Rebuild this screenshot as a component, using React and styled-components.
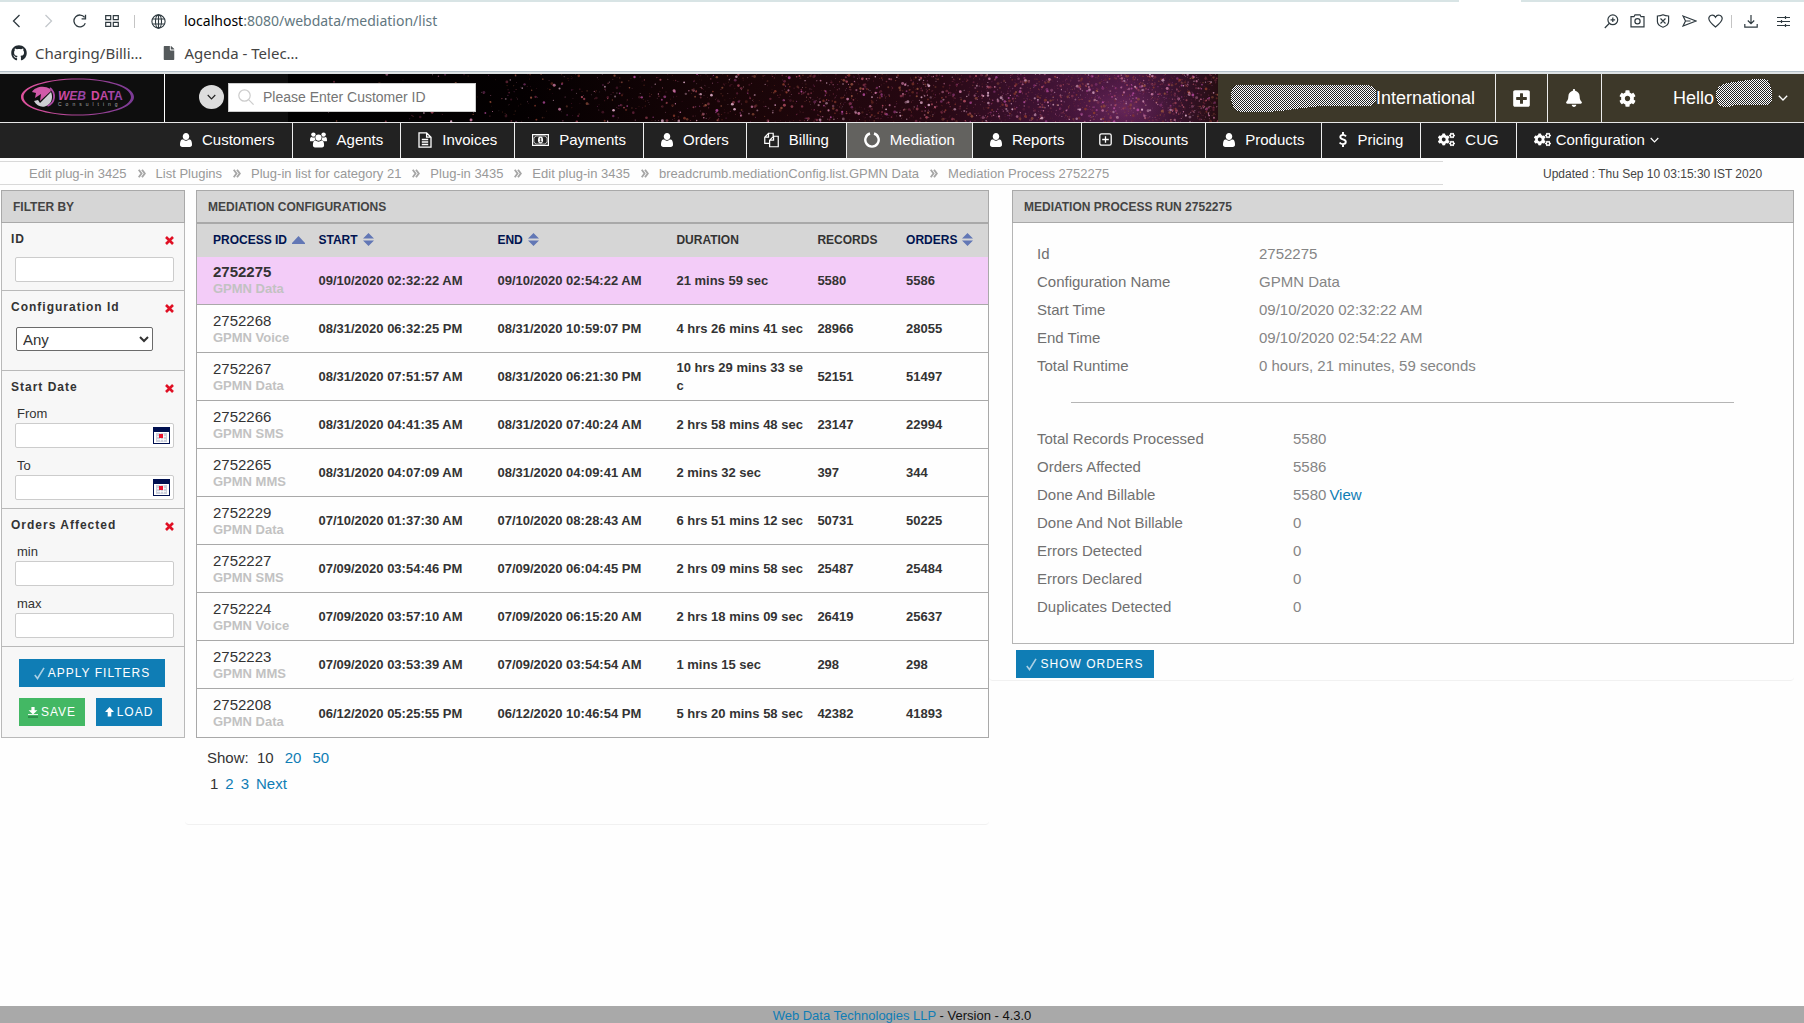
import React from "react";
import styled, { createGlobalStyle, css } from "styled-components";
import {
  FaBell, FaCog, FaCogs, FaPlusSquare, FaGithub, FaFile,
} from "react-icons/fa";

const sans = `"Liberation Sans", Arial, sans-serif`;
const chromeFont = `"Noto Sans", "Open Sans", sans-serif`;
const line = "#a9a9a9";
const headFill = "#d6d6d6";
const blue = "#0f7db5";

const Global = createGlobalStyle`
  * { box-sizing: border-box; }
  html, body, #root { height: 100%; }
  body { margin: 0; background: #fefefe; color: #333; font-family: ${sans}; font-size: 15px; }
  a { color: ${blue}; text-decoration: none; }
  button, input, select { font-family: inherit; margin: 0; }
  button { cursor: pointer; }
  svg { display: block; flex: none; }
`;

const Page = styled.div`
  display: flex;
  flex-direction: column;
  min-height: 100%;
`;

/* ---------- browser bar ---------- */
const Chrome = styled.div`
  background: #fff;
  border-bottom: 1px solid #b3bfc7;
  font-family: ${chromeFont};
`;
const TabEdge = styled.div`
  display: flex;
  height: 2px;
  background: #d8e4e5;
`;
const ActiveTab = styled.span`
  width: 62px;
  margin-left: auto;
  margin-right: 283px;
  background: #fff;
`;
const AddressRow = styled.div`
  display: flex;
  align-items: center;
  height: 38px;
  padding: 0 5px 0 9px;
`;
const ChromeButton = styled.button`
  display: flex;
  align-items: center;
  justify-content: center;
  width: ${(p) => p.$w || 26}px;
  height: 26px;
  padding: 0;
  border: 0;
  background: none;
  color: ${(p) => (p.$off ? "#c4c8cc" : "#2f3a40")};
`;
const ChromeRule = styled.span`
  width: 1px;
  height: 13px;
  margin: 0 ${(p) => p.$gap}px;
  background: #c4c4c4;
`;
const Address = styled.div`
  flex: 1;
  font-size: 14px;
  line-height: 20px;
  color: #627780;
`;
const Host = styled.span`
  color: #000;
`;
const Bookmarks = styled.div`
  display: flex;
  align-items: center;
  gap: 20px;
  height: 31px;
  padding: 0 11px 5px;
`;
const Bookmark = styled.a`
  display: flex;
  align-items: center;
  gap: 8px;
  font-size: 15px;
  line-height: 20px;
  color: #444;
`;

/* ---------- header ---------- */
const Header = styled.header`
  display: flex;
  height: 51px;
  border-top: 2px solid #dde2e4;
  border-bottom: 1px solid #e6e6e6;
  background: #0e0e0e;
`;
const LogoCell = styled.a`
  display: flex;
  align-items: center;
  width: 165px;
  padding: 0 0 3px 21px;
  border-right: 1px solid #fff;
`;
const SearchArea = styled.div`
  position: relative;
  flex: 1;
  display: flex;
  align-items: center;
  gap: 4px;
  padding: 0 0 2px 34px;
`;
const Stars = styled.svg`
  position: absolute;
  inset: 0 0 0 123px;
  width: calc(100% - 123px);
  height: 100%;
`;
const RoundButton = styled.button`
  position: relative;
  display: flex;
  align-items: center;
  justify-content: center;
  width: 25px;
  height: 24px;
  padding: 0;
  border: 0;
  border-radius: 50%;
  background: #ddd;
  color: #222;
`;
const SearchBox = styled.label`
  position: relative;
  display: flex;
  align-items: center;
  gap: 9px;
  width: 248px;
  height: 29px;
  padding-left: 9px;
  border: 1px solid #ccc;
  background: #fff;
  color: #ccc;
`;
const SearchInput = styled.input`
  flex: 1;
  min-width: 0;
  padding: 0;
  border: 0;
  outline: 0;
  background: none;
  font-size: 14px;
  color: #333;
  &::placeholder { color: #757575; opacity: 1; }
`;
const AccountBar = styled.div`
  display: flex;
  background: #3d3829;
  color: #fff;
  font-size: 18px;
`;
const Company = styled.div`
  display: flex;
  align-items: center;
  padding: 0 20px 0 13px;
`;
const ToolButton = styled.button`
  display: flex;
  align-items: center;
  justify-content: center;
  width: ${(p) => p.$w}px;
  padding: 0;
  border: 0;
  border-left: 1px solid #ececec;
  background: none;
  color: #fff;
`;
const Greeting = styled.button`
  display: flex;
  align-items: center;
  padding: 0 16px 0 20px;
  border: 0;
  background: none;
  color: #fff;
  font-size: 18px;
`;
const UserName = styled.span`
  margin: 0 6px 0 2px;
`;

/* ---------- main menu ---------- */
const Menu = styled.nav`
  display: flex;
  height: 35px;
  padding-left: 163px;
  background: #222;
`;
const MenuItem = styled.a`
  display: flex;
  align-items: center;
  gap: ${(p) => p.$gap || 10}px;
  padding: 0 17px 2px;
  border-right: ${(p) => (p.$last ? "0" : "1px solid #eee")};
  background: ${(p) => (p.$active ? "#63625f" : "none")};
  color: #fff;
  font-size: 15px;
  white-space: nowrap;
`;

/* ---------- breadcrumbs ---------- */
const TrailRow = styled.div`
  display: flex;
  align-items: center;
  margin: 3px 0 5px;
`;
const Trail = styled.ol`
  display: flex;
  flex: 1;
  align-items: center;
  height: 24px;
  margin: 0;
  padding: 0 0 0 29px;
  border: solid #d9d9d9;
  border-width: 1px 0;
  list-style: none;
  font-size: 13px;
`;
const Crumb = styled.li`
  display: flex;
  align-items: center;
  gap: 11px;
  margin-right: 10px;
  white-space: nowrap;
`;
const CrumbLink = styled.a`
  color: #999;
`;
const Updated = styled.div`
  width: 361px;
  padding: 1px 0 0 100px;
  font-size: 12px;
  color: #444;
`;

/* ---------- columns ---------- */
const Columns = styled.main`
  flex: 1;
  display: grid;
  grid-template-columns: 184px minmax(0, 804fr) minmax(0, 805fr);
  align-items: start;
  padding: 0 10px 0 1px;
`;
const PanelTitle = styled.h2`
  height: 33px;
  margin: 0;
  padding: 0 11px;
  border: 1px solid ${line};
  background: ${headFill};
  font-size: 12px;
  font-weight: bold;
  line-height: 32px;
  color: #444;
  text-transform: uppercase;
`;

/* filters */
const Filters = styled.form`
  border: 1px solid #b9b9b9;
  border-top: 0;
  background: #f7f7f7;
`;
const FilterGroup = styled.fieldset`
  min-width: 0;
  margin: 0;
  padding: 8px 10px 8px 13px;
  border: 0;
  border-bottom: 1px solid #b9b9b9;
`;
const FilterHead = styled.div`
  display: flex;
  align-items: center;
  justify-content: space-between;
  margin-left: -4px;
  height: 16px;
`;
const FilterName = styled.span`
  font-size: 12px;
  font-weight: bold;
  letter-spacing: 1px;
  line-height: 16px;
`;
const RemoveButton = styled.button`
  display: flex;
  padding: 3px 0 0;
  border: 0;
  background: none;
`;
const Field = styled.label`
  display: block;
  margin-top: ${(p) => (p.$next ? 9 : 10)}px;
`;
const FieldName = styled.span`
  display: block;
  padding-left: 2px;
  font-size: 13px;
  line-height: 18px;
`;
const InputFrame = styled.span`
  display: flex;
  align-items: center;
  width: 159px;
  height: 25px;
  padding-right: 3px;
  border: 1px solid #ccc;
  border-radius: 2px;
  background: #fff;
`;
const TextInput = styled.input`
  flex: 1;
  min-width: 0;
  height: 100%;
  padding: 0 4px;
  border: 0;
  outline: 0;
  background: none;
  font-size: 13px;
`;
const CalendarButton = styled.button`
  display: flex;
  padding: 0;
  border: 0;
  background: none;
`;
const Select = styled.select`
  display: block;
  width: 137px;
  height: 24px;
  margin: 12px 0 11px 1px;
  padding: 0 2px;
  border: 1px solid #6b6b6b;
  border-radius: 2px;
  background: #fff;
  font-size: 15px;
  color: #333;
`;
const FilterActions = styled.div`
  display: flex;
  flex-wrap: wrap;
  gap: 11px;
  padding: 12px 13px 11px 17px;
`;
const Button = styled.button`
  display: flex;
  align-items: center;
  justify-content: center;
  gap: 3px;
  width: ${(p) => p.$w}px;
  height: 28px;
  padding: 0;
  border: 0;
  background: ${(p) => (p.$green ? "#43b864" : blue)};
  color: #fff;
  font-size: 12px;
  letter-spacing: 1px;
  text-transform: uppercase;
`;

/* list */
const ListColumn = styled.section`
  min-height: 635px;
  padding-left: 11px;
  border-bottom: 1px solid #f1f1f1;
  border-radius: 0 0 4px 4px;
`;
const Table = styled.table`
  width: 100%;
  border-collapse: collapse;
  table-layout: fixed;
  border: 1px solid ${line};
`;
const Th = styled.th`
  height: 33px;
  padding: 0 0 1px;
  background: ${headFill};
  font-size: 12px;
  text-align: left;
  text-transform: uppercase;
  color: #333;
  &:first-child { padding-left: 16px; }
`;
const SortLink = styled.a`
  display: flex;
  align-items: center;
  gap: 5px;
  color: #00134f;
`;
const Row = styled.tr`
  ${(p) => p.$on && css`background: #f3ccf8;`}
`;
const Td = styled.td`
  height: 48px;
  padding: 1px 10px 0 0;
  border-bottom: 1px solid ${line};
  font-size: 13px;
  font-weight: bold;
  line-height: 18px;
  word-break: break-all;
  &:first-child { padding: 0 0 0 16px; }
  tr:last-child > & { height: 49px; }
`;
const ProcessLink = styled.a`
  display: block;
  font-size: 15px;
  font-weight: ${(p) => (p.$on ? "bold" : "normal")};
  line-height: 17px;
  color: #333;
`;
const ConfigName = styled.span`
  display: block;
  font-size: 13px;
  line-height: 17px;
  color: #c2c2c2;
`;
const Pager = styled.div`
  display: flex;
  gap: ${(p) => p.$gap}px;
  padding-left: ${(p) => p.$left}px;
  line-height: 26px;
`;
const Pagers = styled.div`
  padding-top: 7px;
`;

/* details */
const DetailColumn = styled.section`
  padding: 0 0 2px 23px;
  border-bottom: 1px solid #f1f1f1;
  border-radius: 0 0 4px 4px;
`;
const Details = styled.div`
  margin-bottom: 6px;
  padding: 16px 0 23px;
  border: 1px solid #b5b5b5;
  border-top: 0;
`;
const DetailList = styled.dl`
  display: grid;
  grid-template-columns: ${(p) => p.$label}px 1fr;
  grid-auto-rows: 28px;
  align-items: center;
  margin: 0;
  padding-left: 24px;
`;
const DetailName = styled.dt`
  color: #707070;
`;
const DetailValue = styled.dd`
  margin: 0;
  color: #858585;
`;
const ViewLink = styled.a`
  margin-left: 3px;
`;
const Divider = styled.hr`
  margin: 23px 59px 21px 58px;
  border: 0;
  border-top: 1px solid #b5b5b5;
`;
const ShowOrders = styled(Button)`
  margin-left: 4px;
`;

const Footer = styled.footer`
  height: 17px;
  background: #a9a9a9;
  font-size: 13px;
  line-height: 19px;
  text-align: center;
  color: #111;
`;

/* ---------- drawings ---------- */
const Stroke = ({ w = 16, h = 16, width = 1.3, children }) => (
  <svg width={w} height={h} viewBox={`0 0 ${w} ${h}`} fill="none" stroke="currentColor" strokeWidth={width}>
    {children}
  </svg>
);

const UserIcon = () => (
  <svg width="12" height="14" viewBox="0 256 1408 1536" preserveAspectRatio="none" fill="#fff">
    <path d="M1408 1533q0 120-73 189.5t-194 69.5h-874q-121 0-194-69.5t-73-189.5q0-53 3.5-103.5t14-109 26.5-108.5 43-97.5 62-81 85.5-53.5 111.5-20q9 0 42 21.5t74.5 48 108 48 133.5 21.5 133.5-21.5 108-48 74.5-48 42-21.5q61 0 111.5 20t85.5 53.5 62 81 43 97.5 26.5 108.5 14 109 3.5 103.5zm-320-893q0 159-112.5 271.5t-271.5 112.5-271.5-112.5-112.5-271.5 112.5-271.5 271.5-112.5 271.5 112.5 112.5 271.5z" />
  </svg>
);
const GroupIcon = () => (
  <svg width="17" height="16" viewBox="0 0 17 16" fill="#fff">
    <circle cx="3.4" cy="2.6" r="2.2" />
    <circle cx="13.6" cy="2.6" r="2.2" />
    <path d="M0 8.4C0 6 .6 5 1.6 5c1 .7 2.4.8 3.300.3C4.700 6.500 5 7.400 5.600 8.100 4.600 8.200 3.800 8.600 3.200 9.300H1.300C.4 9.300 0 9 0 8.400zM17 8.400C17 6 16.400 5 15.400 5c-1 .7-2.400.8-3.300.3.2 1.200-.1 2.100-.7 2.800 1 .1 1.800.5 2.400 1.200h1.900c.9 0 1.300-.3 1.300-.9z" />
    <circle cx="8.500" cy="5.600" r="3.100" />
    <path d="M2.900 13.200c0-2.800.7-4.600 2.500-4.600 2 1.400 4.200 1.400 6.200 0 1.800 0 2.500 1.800 2.500 4.600 0 1.300-.8 2.200-2.100 2.200H5c-1.300 0-2.100-.9-2.100-2.200z" />
  </svg>
);
const InvoiceIcon = () => (
  <Stroke w={14} h={16}>
    <path d="M1 .8h7.600L13 5.200v10H1zM8.600.8v4.400H13M3.800 7.500h6.400M3.800 10h6.400M3.800 12.500h6.400" />
  </Stroke>
);
const MoneyIcon = () => (
  <svg width="17" height="12" viewBox="0 0 18 12" preserveAspectRatio="none" fill="none" stroke="#fff">
    <rect x=".6" y=".6" width="16.800" height="10.800" strokeWidth="1.300" />
    <path d="M2 3.600A2 2 0 003.800 2h10.400A2 2 0 0016 3.600v4.800A2 2 0 0014.200 10H3.800A2 2 0 002 8.400z" strokeWidth=".7" />
    <ellipse cx="9" cy="6" rx="2.700" ry="3.400" fill="#fff" stroke="none" />
    <path d="M8.200 4.900l1-.7v3.400M8 7.700h2.300" stroke="#222" strokeWidth=".9" />
  </svg>
);
const CopyIcon = () => (
  <svg width="15" height="16" viewBox="0 0 16 16" fill="none" stroke="#fff" strokeWidth="1.300">
    <path d="M6 11.500H.8V5L4.800.8h5V4M4.800.8V5h-4M10.200 4h5v11.200H6V8.200zM10.200 4v4.200H6" />
  </svg>
);
const NotchIcon = () => (
  <Stroke w={16} h={16} width={2.400}>
    <path d="M10 1.500a6.700 6.700 0 11-4 0" />
  </Stroke>
);
const PlusBoxIcon = () => (
  <Stroke w={13} h={13}>
    <rect x=".8" y=".8" width="11.400" height="11.400" rx="1.800" />
    <path d="M6.500 3.200v6.600M3.200 6.500h6.600" />
  </Stroke>
);
const DollarIcon = () => (
  <svg width="8" height="15" viewBox="0 0 8 15" fill="none" stroke="#fff" strokeWidth="1.900">
    <path d="M7 4.400C6.200 3.300 5.200 2.900 4 2.900c-1.700 0-2.700.9-2.700 2.100 0 3.100 5.500 1.500 5.500 4.800 0 1.400-1.100 2.300-2.900 2.300-1.400 0-2.500-.5-3.300-1.600M4 0v3M4 12v3" />
  </svg>
);
const Chevron = ({ w = 10 }) => (
  <svg width={w} height="6" viewBox="0 0 10 6" fill="none" stroke="currentColor" strokeWidth="1.300">
    <path d="M.8.8L5 5 9.200.8" />
  </svg>
);
const CrumbMark = () => (
  <svg width="8" height="9" viewBox="0 0 8 9" fill="none" stroke="#a6a6a6" strokeWidth="1.900">
    <path d="M.7.7l2.800 3.800L.7 8.300M4 .7l2.800 3.800L4 8.300" />
  </svg>
);
const CrossIcon = () => (
  <svg width="9" height="9" viewBox="0 0 9 9" stroke="#e01024" strokeWidth="2.600">
    <path d="M1 1l7 7M8 1L1 8" />
  </svg>
);
const CalendarIcon = () => (
  <svg width="17" height="17" viewBox="0 0 17 17">
    <rect width="17" height="17" fill="#001050" />
    <rect x="1" y="5" width="15" height="11" fill="#fff" />
    <rect x="3" y="6" width="11" height="9" fill="#ccd0dc" />
    <path d="M4 9.500h9M4 12.500h9M10.500 6.500v8M7.500 6.500v8" stroke="#fff" strokeWidth=".7" />
    <rect x="6" y="7" width="4" height="4" fill="#e8112d" />
  </svg>
);
const CheckIcon = () => (
  <svg width="11" height="13" viewBox="0 0 11 13" fill="none" stroke="#a9cfe4" strokeWidth="1.600">
    <path d="M.8 8l2.700 3.500L10 .8" />
  </svg>
);
const SaveIcon = () => (
  <svg width="10" height="11" viewBox="0 0 10 11">
    <path d="M3.400 0h3.200v3.200h2.800L5 7.600.6 3.200h2.800z" fill="#fff" />
    <path d="M0 7.500h10" stroke="#e6f6ea" />
    <path d="M0 10h10" stroke="#1f6b36" />
  </svg>
);
const LoadIcon = () => (
  <svg width="9" height="10" viewBox="0 0 9 10" fill="#fff">
    <path d="M4.500 0L9 5H6.300v4.500H2.700V5H0z" />
  </svg>
);
const SortBoth = () => (
  <svg width="11" height="13" viewBox="0 0 11 13" fill="#6277b5">
    <path d="M5.500 0L11 5.500H0zM0 7.500h11L5.500 13z" />
  </svg>
);
const SortUp = () => (
  <svg width="13" height="8" viewBox="0 0 13 8" fill="#6277b5">
    <path d="M6.500 0L13 7v1H0V7z" />
  </svg>
);

const Logo = () => (
  <svg width="113" height="38" viewBox="0 0 113 38" role="img" aria-label="Web Data Consulting">
    <defs>
      <linearGradient id="ring" x1="0" x2="1">
        <stop offset="0" stopColor="#e0529c" />
        <stop offset="1" stopColor="#7a3a95" />
      </linearGradient>
      <linearGradient id="word" x1="0" x2="1">
        <stop offset="0" stopColor="#dd4a9e" />
        <stop offset="1" stopColor="#8e44a8" />
      </linearGradient>
    </defs>
    <path fillRule="evenodd" fill="url(#ring)" d="M56.500.5C88 .5 113 8.500 113 19S88 37.500 56.500 37.500 0 29.500 0 19 25 .5 56.500.5zm0 1C27 1.500 2.500 9 2.500 19S27 36.500 56.500 36.500 110 29 110 19 86 1.500 56.500 1.500z" />
    <path d="M11 14c3-5 12-7 18-3l1 2-11 10 1-7-6 4 1-5z" fill="#d05aa8" />
    <path d="M13 23l4-1 2 3L30 14c2 5 1 10-3 13-5 3.500-11 1.500-14-4z" fill="#cfd0d4" />
    <path d="M29 10c6 5 5.500 15-2.500 18" fill="none" stroke="#b04aa6" strokeWidth="1.800" />
    <text x="37" y="22" fontFamily="Liberation Sans, sans-serif" fontWeight="bold" fontStyle="italic" fontSize="12" fill="url(#word)">WEB</text>
    <text x="70" y="22" fontFamily="Liberation Sans, sans-serif" fontWeight="bold" fontSize="12" fill="url(#word)">DATA</text>
    <text x="37" y="28" fontFamily="Liberation Sans, sans-serif" fontSize="5" letterSpacing="4" fill="#a8a8a8">Consulting</text>
  </svg>
);

const starColors = ["#a8485c", "#7c2f45", "#c878a0", "#8b3a2c", "#d9a8c4", "#b04898", "#93503c", "#6a2440"];
function makeStars() {
  let seed = 20;
  const next = () => {
    seed = (seed * 16807) % 2147483647;
    return seed / 2147483647;
  };
  return Array.from({ length: 2600 }, (_, i) => {
    const x = 930 * Math.pow(next(), 0.42);
    return {
      x, y: next() * 48, r: 0.4 + Math.pow(next(), 3) * 1.1,
      fill: starColors[Math.floor(next() * starColors.length)],
      opacity: 0.35 + next() * 0.6, key: i,
    };
  });
}
const stars = makeStars();

const Starfield = () => (
  <Stars viewBox="0 0 930 48" preserveAspectRatio="xMaxYMid slice" aria-hidden="true">
    <defs>
      <linearGradient id="sky" x1="0" x2="1">
        <stop offset="0" stopColor="#000" />
        <stop offset=".25" stopColor="#040001" />
        <stop offset=".5" stopColor="#1a0508" />
        <stop offset=".7" stopColor="#270813" />
        <stop offset=".8" stopColor="#3c1130" />
        <stop offset=".9" stopColor="#4f1a45" />
        <stop offset=".95" stopColor="#3a1330" />
        <stop offset="1" stopColor="#260d12" />
      </linearGradient>
      <radialGradient id="glow">
        <stop offset="0" stopColor="#a0488c" stopOpacity=".3" />
        <stop offset="1" stopColor="#7a2a70" stopOpacity="0" />
      </radialGradient>
    </defs>
    <rect width="930" height="48" fill="url(#sky)" />
    <ellipse cx="838" cy="34" rx="60" ry="28" fill="url(#glow)" />
    {stars.map((s) => (
      <circle key={s.key} cx={s.x} cy={s.y} r={s.r} fill={s.fill} opacity={s.opacity} />
    ))}
  </Stars>
);

const Scribble = ({ id, w, h, d }) => (
  <svg width={w} height={h} viewBox={`0 0 ${w} ${h}`} aria-hidden="true" shapeRendering="crispEdges">
    <defs>
      <pattern id={id} width="2" height="2" patternUnits="userSpaceOnUse">
        <rect width="2" height="2" fill="#222" />
        <rect width="1" height="1" fill="#fff" />
        <rect x="1" y="1" width="1" height="1" fill="#fff" />
      </pattern>
    </defs>
    <path d={d} fill={`url(#${id})`} />
  </svg>
);

/* ---------- data ---------- */
const menu = [
  ["Customers", <UserIcon />],
  ["Agents", <GroupIcon />],
  ["Invoices", <InvoiceIcon />],
  ["Payments", <MoneyIcon />],
  ["Orders", <UserIcon />],
  ["Billing", <CopyIcon />],
  ["Mediation", <NotchIcon />],
  ["Reports", <UserIcon />],
  ["Discounts", <PlusBoxIcon />],
  ["Products", <UserIcon />],
  ["Pricing", <DollarIcon />],
  ["CUG", <FaCogs size={17} />],
];
const crumbs = [
  "Edit plug-in 3425", "List Plugins", "Plug-in list for category 21", "Plug-in 3435", "Edit plug-in 3435",
  "breadcrumb.mediationConfig.list.GPMN Data", "Mediation Process 2752275",
];
const processes = [
  ["2752275", "GPMN Data", "09/10/2020 02:32:22 AM", "09/10/2020 02:54:22 AM", "21 mins 59 sec", "5580", "5586"],
  ["2752268", "GPMN Voice", "08/31/2020 06:32:25 PM", "08/31/2020 10:59:07 PM", "4 hrs 26 mins 41 sec", "28966", "28055"],
  ["2752267", "GPMN Data", "08/31/2020 07:51:57 AM", "08/31/2020 06:21:30 PM", "10 hrs 29 mins 33 sec", "52151", "51497"],
  ["2752266", "GPMN SMS", "08/31/2020 04:41:35 AM", "08/31/2020 07:40:24 AM", "2 hrs 58 mins 48 sec", "23147", "22994"],
  ["2752265", "GPMN MMS", "08/31/2020 04:07:09 AM", "08/31/2020 04:09:41 AM", "2 mins 32 sec", "397", "344"],
  ["2752229", "GPMN Data", "07/10/2020 01:37:30 AM", "07/10/2020 08:28:43 AM", "6 hrs 51 mins 12 sec", "50731", "50225"],
  ["2752227", "GPMN SMS", "07/09/2020 03:54:46 PM", "07/09/2020 06:04:45 PM", "2 hrs 09 mins 58 sec", "25487", "25484"],
  ["2752224", "GPMN Voice", "07/09/2020 03:57:10 AM", "07/09/2020 06:15:20 AM", "2 hrs 18 mins 09 sec", "26419", "25637"],
  ["2752223", "GPMN MMS", "07/09/2020 03:53:39 AM", "07/09/2020 03:54:54 AM", "1 mins 15 sec", "298", "298"],
  ["2752208", "GPMN Data", "06/12/2020 05:25:55 PM", "06/12/2020 10:46:54 PM", "5 hrs 20 mins 58 sec", "42382", "41893"],
];
const columnWidths = ["15.4%", "22.6%", "22.6%", "17.8%", "11.2%", "10.4%"];
const runInfo = [
  ["Id", "2752275"],
  ["Configuration Name", "GPMN Data"],
  ["Start Time", "09/10/2020 02:32:22 AM"],
  ["End Time", "09/10/2020 02:54:22 AM"],
  ["Total Runtime", "0 hours, 21 minutes, 59 seconds"],
];
const runTotals = [
  ["Total Records Processed", "5580"],
  ["Orders Affected", "5586"],
  ["Done And Billable", "5580", true],
  ["Done And Not Billable", "0"],
  ["Errors Detected", "0"],
  ["Errors Declared", "0"],
  ["Duplicates Detected", "0"],
];

const Group = ({ name, children }) => (
  <FilterGroup aria-label={name}>
    <FilterHead>
      <FilterName>{name}</FilterName>
      <RemoveButton type="button" aria-label={`Remove ${name}`}><CrossIcon /></RemoveButton>
    </FilterHead>
    {children}
  </FilterGroup>
);

const TextField = ({ name, label, next, date }) => (
  <Field $next={next}>
    {name && <FieldName>{name}</FieldName>}
    <InputFrame>
      <TextInput type="text" aria-label={label || name} />
      {date && <CalendarButton type="button" aria-label={`Choose ${name}`}><CalendarIcon /></CalendarButton>}
    </InputFrame>
  </Field>
);

const BrowserBar = () => (
  <Chrome>
    <TabEdge><ActiveTab /></TabEdge>
    <AddressRow>
      <ChromeButton $w={14} aria-label="Back"><Stroke w={9} h={14}><path d="M7.500 1L1.500 7l6 6" /></Stroke></ChromeButton>
      <ChromeButton $w={50} $off aria-label="Forward"><Stroke w={9} h={14}><path d="M1.500 1l6 6-6 6" /></Stroke></ChromeButton>
      <ChromeButton $w={14} aria-label="Reload"><Stroke w={14} h={14}><path d="M12.300 9.200A5.900 5.900 0 1111.600 3.400M12.500.8v4H8.600" /></Stroke></ChromeButton>
      <ChromeButton $w={50} aria-label="Speed dial"><Stroke w={14} h={12} width={1.200}><path d="M.7.7h5v4h-5zM8.300.7h5v4h-5zM.7 7.300h5v4h-5zM8.300 7.300h5v4h-5z" /></Stroke></ChromeButton>
      <ChromeRule $gap={-3} />
      <ChromeButton $w={52} aria-label="Site information"><Stroke w={15} h={15} width={1.100}><circle cx="7.500" cy="7.500" r="6.600" /><ellipse cx="7.500" cy="7.500" rx="3" ry="6.600" /><path d="M1.500 5h12M1.500 10h12M7.500 1v13" /></Stroke></ChromeButton>
      <Address><Host>localhost</Host>:8080/webdata/mediation/list</Address>
      <ChromeButton aria-label="Zoom"><Stroke w={15} h={15} width={1.200}><circle cx="8.800" cy="5.800" r="4.900" /><path d="M5.200 9.500L.8 14M6.500 5.800h4.600M8.800 3.500v4.600" /></Stroke></ChromeButton>
      <ChromeButton aria-label="Snapshot"><Stroke w={15} h={14} width={1.200}><path d="M1 2.700h3L5 .8h5l1 1.900h3v10.200H1z" /><circle cx="7.500" cy="7.300" r="2.600" /></Stroke></ChromeButton>
      <ChromeButton aria-label="Ad blocker"><Stroke w={14} h={14} width={1.200}><path d="M7 .8c2 1 4 1.200 5.600 1.200v5.500c0 2.500-2 4.500-5.600 5.700C3.400 12 1.400 10 1.400 7.500V2C3 2 5 1.800 7 .8zM4.500 4.500l5 5M9.500 4.500l-5 5" /></Stroke></ChromeButton>
      <ChromeButton aria-label="Send to flow"><Stroke w={15} h={12} width={1.200}><path d="M1 1l13 5-13 5 2.500-5zM3.500 6h5" /></Stroke></ChromeButton>
      <ChromeButton aria-label="Save to favourites"><Stroke w={15} h={14} width={1.200}><path d="M7.500 13C3 9.500.8 7.300.8 4.600.8 1.200 5.500-.4 7.500 3.200 9.500-.4 14.200 1.200 14.200 4.600 14.200 7.300 12 9.500 7.500 13z" /></Stroke></ChromeButton>
      <ChromeRule $gap={3} />
      <ChromeButton $w={32} aria-label="Downloads"><Stroke w={14} h={13} width={1.200}><path d="M7 0v8.500M3.800 5.500L7 8.700l3.200-3.200M.8 9v3.200h12.400V9" /></Stroke></ChromeButton>
      <ChromeButton $w={32} aria-label="Easy setup"><Stroke w={13} h={11} width={1.200}><path d="M0 1.500h13M0 5.500h13M0 9.500h13M8.500 0v3M4.500 4v3M8.500 8v3" /></Stroke></ChromeButton>
    </AddressRow>
    <Bookmarks>
      <Bookmark href="#"><FaGithub size={16} color="#222a30" />Charging/Billi…</Bookmark>
      <Bookmark href="#"><FaFile size={14} color="#555a5c" />Agenda - Telec…</Bookmark>
    </Bookmarks>
  </Chrome>
);

const AppHeader = () => (
  <Header>
    <LogoCell href="#"><Logo /></LogoCell>
    <SearchArea>
      <Starfield />
      <RoundButton type="button" aria-label="Search type"><Chevron w={9} /></RoundButton>
      <SearchBox>
        <Stroke w={16} h={16} width={1.200}><circle cx="6.500" cy="6.500" r="5.700" /><path d="M10.600 10.600l5 5" /></Stroke>
        <SearchInput type="text" aria-label="Customer ID" placeholder="Please Enter Customer ID" />
      </SearchBox>
    </SearchArea>
    <AccountBar>
      <Company>
        <Scribble id="maskA" w={145} h={28} d="M6 1h128c9 0 12 5 12 10 0 6-3 11-9 11H95c-20 0-40 6-62 6H10C3 28 0 20 0 13 0 6 2 1 6 1z" />
        International
      </Company>
      <ToolButton $w={52} aria-label="Add"><FaPlusSquare size={19} /></ToolButton>
      <ToolButton $w={54} aria-label="Notifications"><FaBell size={18} /></ToolButton>
      <ToolButton $w={52} aria-label="Settings"><FaCog size={17} /></ToolButton>
      <Greeting type="button">
        Hello
        <UserName>
          <Scribble id="maskB" w={56} h={38} d="M0 13C1 6 9 4 17 3 27 2 40-1 49 0c5 1 8 12 7 20-1 7-4 7-10 6-8-1-17 1-24 0-5-1-8 3-14 2C1 27 0 21 0 13z" />
        </UserName>
        <Chevron w={10} />
      </Greeting>
    </AccountBar>
  </Header>
);

const ProcessTable = () => (
  <Table>
    <colgroup>{columnWidths.map((w, i) => <col key={i} width={w} />)}</colgroup>
    <thead>
      <tr>
        <Th><SortLink href="#">Process ID<SortUp /></SortLink></Th>
        <Th><SortLink href="#">Start<SortBoth /></SortLink></Th>
        <Th><SortLink href="#">End<SortBoth /></SortLink></Th>
        <Th>Duration</Th>
        <Th>Records</Th>
        <Th><SortLink href="#">Orders<SortBoth /></SortLink></Th>
      </tr>
    </thead>
    <tbody>
      {processes.map(([id, config, ...cells], i) => (
        <Row key={id} $on={i === 0}>
          <Td>
            <ProcessLink href="#" $on={i === 0}>{id}</ProcessLink>
            <ConfigName>{config}</ConfigName>
          </Td>
          {cells.map((c, n) => <Td key={n}>{c}</Td>)}
        </Row>
      ))}
    </tbody>
  </Table>
);

const DetailRows = ({ rows, label }) => (
  <DetailList $label={label}>
    {rows.map(([name, value, view]) => (
      <React.Fragment key={name}>
        <DetailName>{name}</DetailName>
        <DetailValue>{value}{view && <ViewLink href="#">View</ViewLink>}</DetailValue>
      </React.Fragment>
    ))}
  </DetailList>
);

export default function App() {
  return (
    <Page>
      <Global />
      <BrowserBar />
      <AppHeader />
      <Menu>
        {menu.map(([name, icon]) => (
          <MenuItem key={name} href="#" $active={name === "Mediation"}>{icon}{name}</MenuItem>
        ))}
        <MenuItem href="#" $last $gap={5}><FaCogs size={17} />Configuration<Chevron w={9} /></MenuItem>
      </Menu>
      <TrailRow>
        <Trail>
          {crumbs.map((c, i) => (
            <Crumb key={c}>
              <CrumbLink href="#">{c}</CrumbLink>
              {i < crumbs.length - 1 && <CrumbMark />}
            </Crumb>
          ))}
        </Trail>
        <Updated>Updated : Thu Sep 10 03:15:30 IST 2020</Updated>
      </TrailRow>
      <Columns>
        <aside>
          <PanelTitle>Filter by</PanelTitle>
          <Filters>
            <Group name="ID"><TextField label="ID" /></Group>
            <Group name="Configuration Id">
              <Select aria-label="Configuration Id" defaultValue="Any"><option>Any</option></Select>
            </Group>
            <Group name="Start Date">
              <TextField name="From" date />
              <TextField name="To" next date />
            </Group>
            <Group name="Orders Affected">
              <TextField name="min" />
              <TextField name="max" next />
            </Group>
            <FilterActions>
              <Button type="button" $w={146}><CheckIcon />Apply filters</Button>
              <Button type="button" $w={66} $green><SaveIcon />Save</Button>
              <Button type="button" $w={66}><LoadIcon />Load</Button>
            </FilterActions>
          </Filters>
        </aside>
        <ListColumn>
          <PanelTitle>Mediation Configurations</PanelTitle>
          <ProcessTable />
          <Pagers>
            <Pager $gap={11} $left={11}>
              <span>Show:&nbsp; 10</span><a href="#">20</a><a href="#">50</a>
            </Pager>
            <Pager $gap={7} $left={14}>
              <span>1</span><a href="#">2</a><a href="#">3</a><a href="#">Next</a>
            </Pager>
          </Pagers>
        </ListColumn>
        <DetailColumn>
          <PanelTitle>Mediation Process Run 2752275</PanelTitle>
          <Details>
            <DetailRows rows={runInfo} label={222} />
            <Divider />
            <DetailRows rows={runTotals} label={256} />
          </Details>
          <ShowOrders type="button" $w={138}><CheckIcon />Show orders</ShowOrders>
        </DetailColumn>
      </Columns>
      <Footer><a href="#">Web Data Technologies LLP</a> - Version - 4.3.0</Footer>
    </Page>
  );
}
